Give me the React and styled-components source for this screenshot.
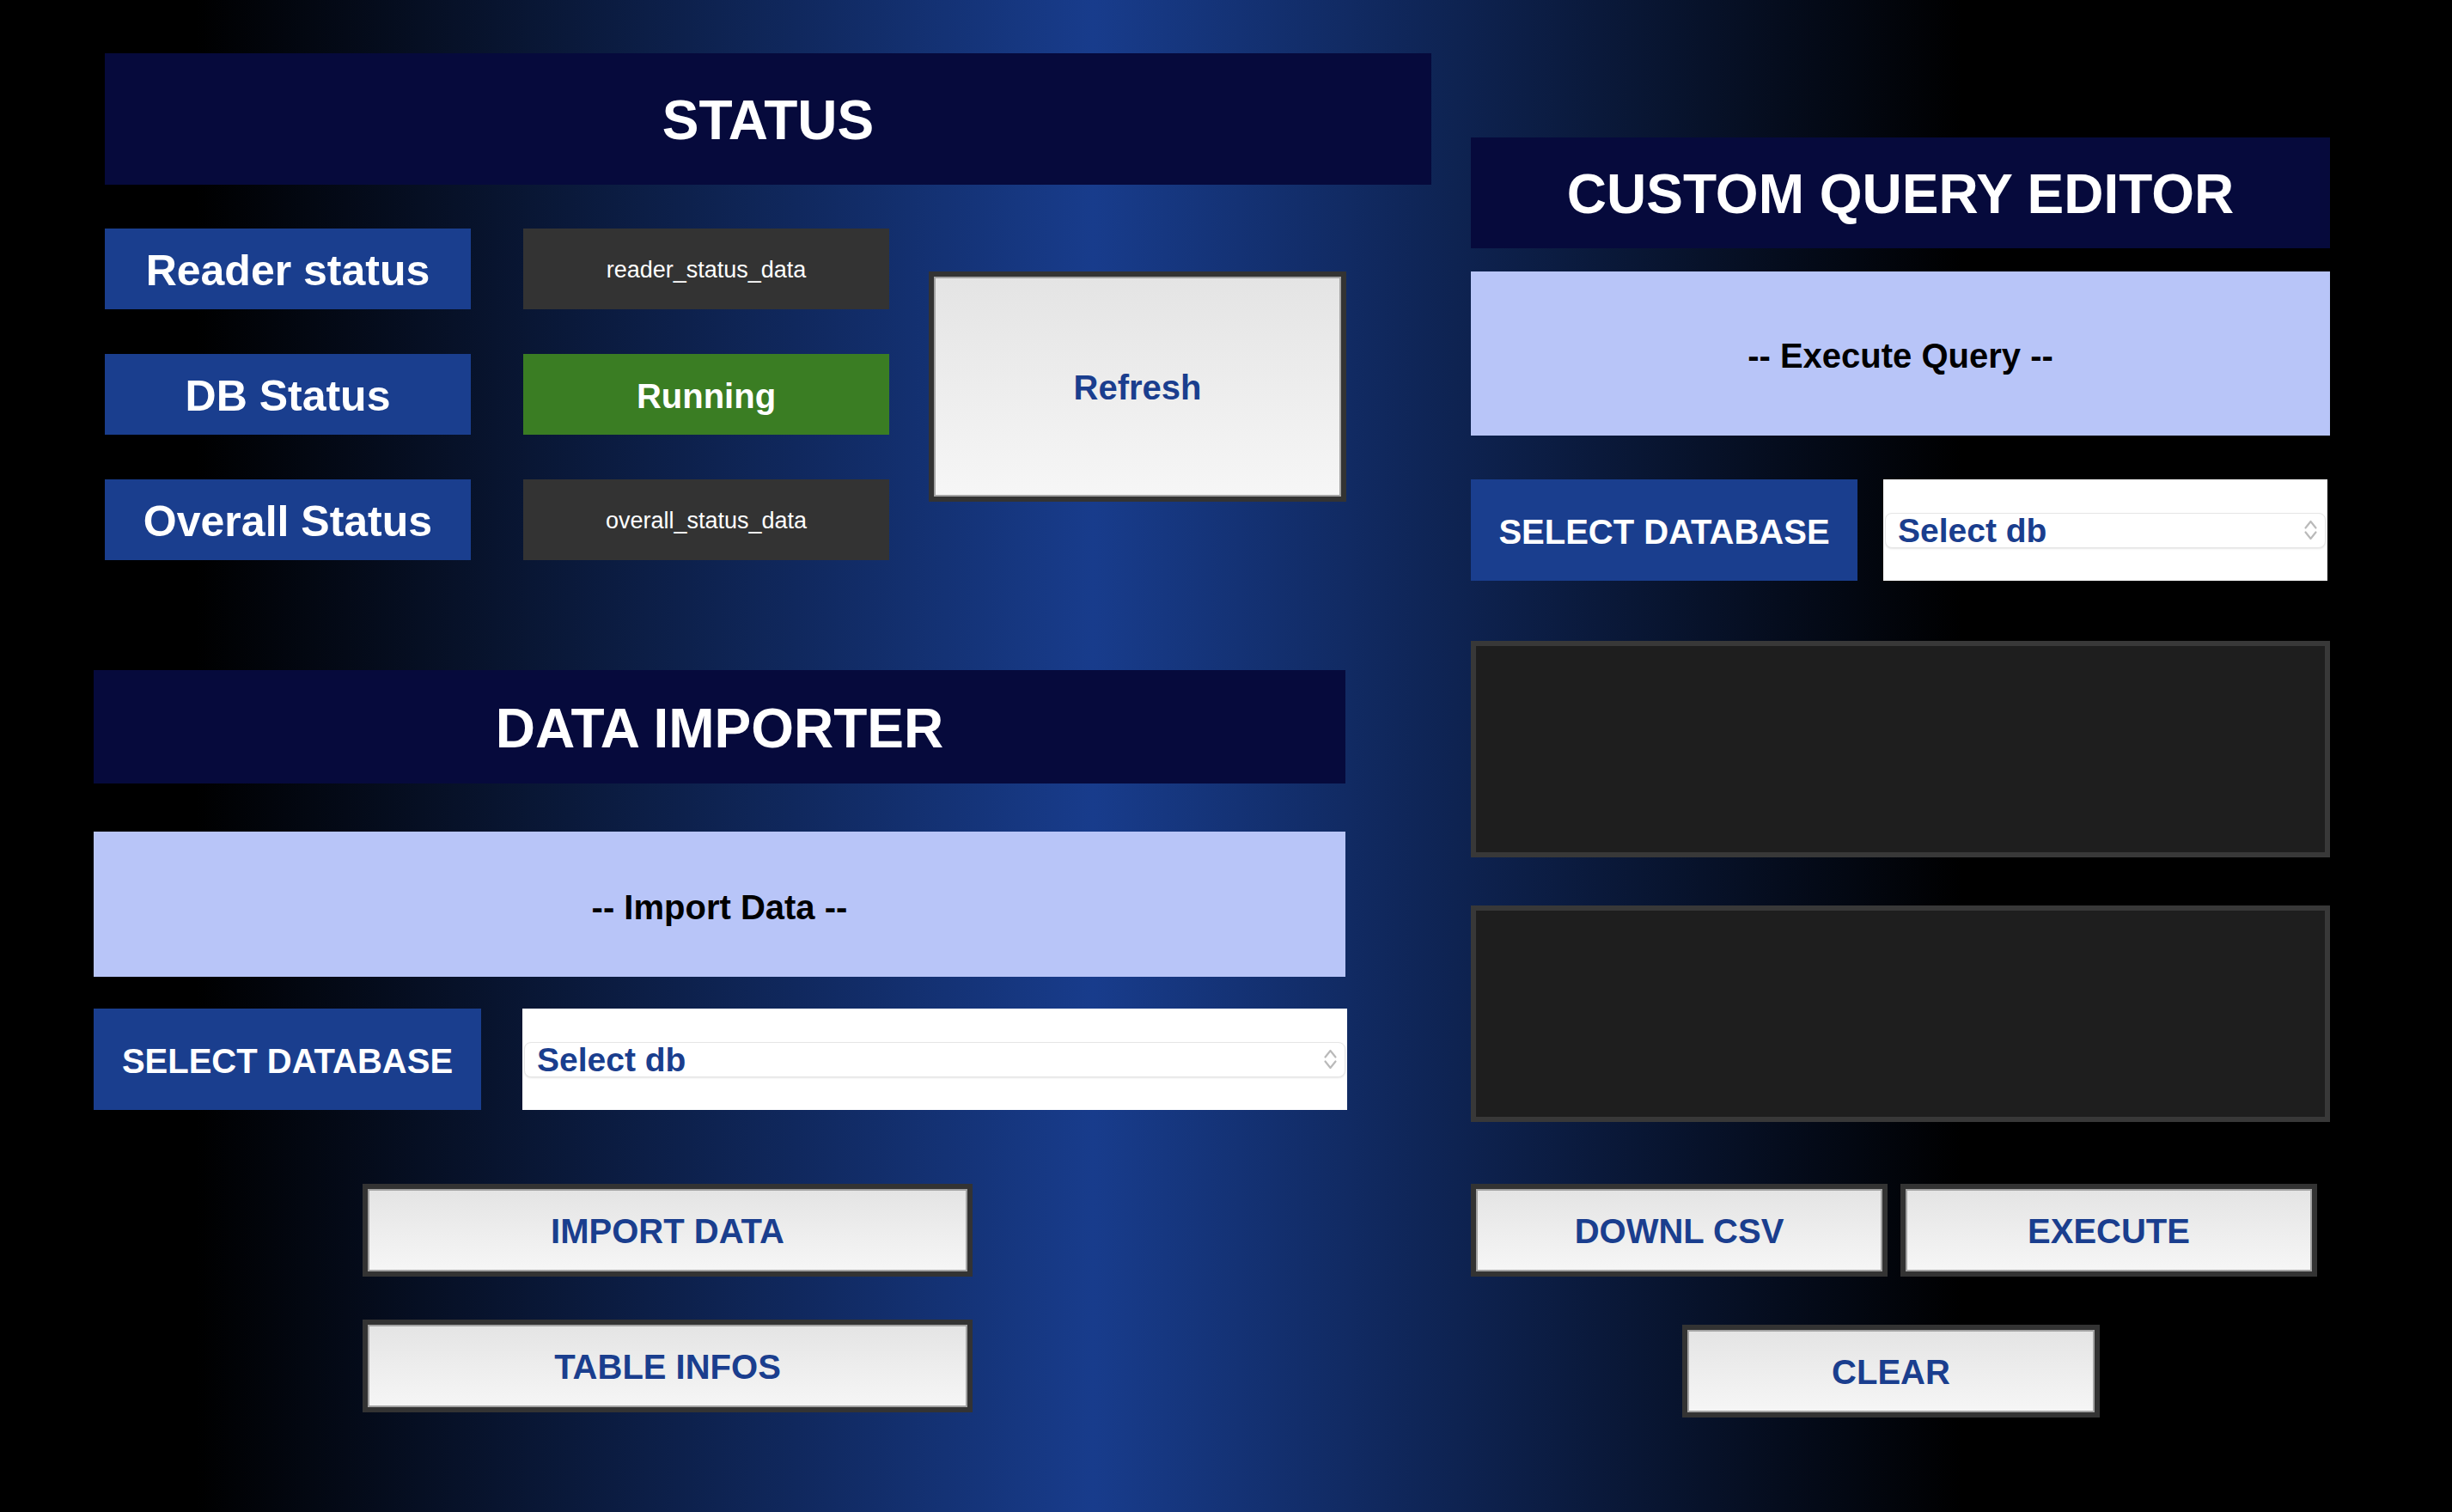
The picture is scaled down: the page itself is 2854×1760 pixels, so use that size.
import styled, {createGlobalStyle} from 'styled-components'

const GlobalStyle = createGlobalStyle`
  html, body {
    margin: 0;
    padding: 0;
  }
  body {
    background: #000;
    font-family: "Liberation Sans", Arial, sans-serif;
  }
`

const Page = styled.div`
  box-sizing: border-box;
  width: 2854px;
  height: 1760px;
  overflow: hidden;
  padding: 62px 0 0 109px;
  display: flex;
  align-items: flex-start;
  gap: 46px;
  background: linear-gradient(to right, #000 0%, #000 8%, #183c8c 44.6%, #000 80%, #000 100%);
`

const Column = styled.div`
  display: flex;
  flex-direction: column;
  align-items: flex-start;
  width: ${p => p.$width}px;
  margin-top: ${p => p.$top || 0}px;
`

const SectionHeader = styled.div`
  box-sizing: border-box;
  display: flex;
  align-items: center;
  justify-content: center;
  width: ${p => p.$width}px;
  height: ${p => p.$height}px;
  margin-left: ${p => p.$indent || 0}px;
  margin-top: ${p => p.$top || 0}px;
  padding-top: 3px;
  background: #060a3c;
  color: #fff;
  font-size: 64px;
  font-weight: 700;
`

const StatusBody = styled.div`
  display: flex;
  align-items: flex-start;
  margin: 51px 0 0 13px;
`

const StatusGrid = styled.div`
  display: grid;
  grid-template-columns: 426px 426px;
  grid-auto-rows: 94px;
  column-gap: 61px;
  row-gap: 52px;
`

const StatusLabel = styled.div`
  box-sizing: border-box;
  display: flex;
  align-items: center;
  justify-content: center;
  padding-top: 4px;
  background: #1a3e8e;
  color: #fff;
  font-size: 50px;
  font-weight: 700;
`

const StatusValue = styled.div`
  box-sizing: border-box;
  display: flex;
  align-items: center;
  justify-content: center;
  padding-top: ${p => p.$running ? 4 : 2}px;
  background: ${p => p.$running ? '#3a7d23' : '#333333'};
  color: #fff;
  font-size: ${p => p.$running ? 40 : 27}px;
  font-weight: ${p => p.$running ? 700 : 400};
`

const Button = styled.button`
  box-sizing: border-box;
  display: flex;
  align-items: center;
  justify-content: center;
  width: ${p => p.$width}px;
  height: ${p => p.$height || 108}px;
  margin-top: ${p => p.$top || 0}px;
  margin-left: ${p => p.$left || 0}px;
  padding: 2px 0 0;
  border: 6px solid #333;
  box-shadow: inset 0 0 0 2px #a4a4a4;
  background: linear-gradient(#e4e4e4, #f6f6f6);
  color: #1a3e8e;
  font-family: "Liberation Sans", Arial, sans-serif;
  font-size: 40px;
  font-weight: 700;
  cursor: pointer;
`

const InfoPanel = styled.div`
  box-sizing: border-box;
  display: flex;
  align-items: center;
  justify-content: center;
  width: ${p => p.$width}px;
  height: ${p => p.$height}px;
  margin-top: ${p => p.$top}px;
  padding-top: ${p => p.$shift}px;
  background: #b8c5f8;
  color: #000;
  font-size: 40px;
  font-weight: 700;
`

const SelectRow = styled.div`
  display: flex;
  height: 118px;
  margin-top: ${p => p.$top}px;
  gap: ${p => p.$gap}px;
`

const SelectLabel = styled.div`
  box-sizing: border-box;
  display: flex;
  align-items: center;
  justify-content: center;
  width: ${p => p.$width}px;
  padding-top: 4px;
  background: #1a3e8e;
  color: #fff;
  font-size: 40px;
  font-weight: 700;
`

const SelectBox = styled.div`
  position: relative;
  box-sizing: border-box;
  display: flex;
  align-items: center;
  width: ${p => p.$width}px;
  padding: 0 2px;
  background: #fff;
`

const DbSelect = styled.select`
  appearance: none;
  -webkit-appearance: none;
  box-sizing: border-box;
  width: 100%;
  height: 41px;
  padding: 0 0 0 14px;
  border: 1px solid #e6e6e6;
  border-radius: 8px;
  box-shadow: 0 1px 2px rgba(0, 0, 0, 0.1);
  background: #fff;
  color: #1a3e8e;
  font-family: "Liberation Sans", Arial, sans-serif;
  font-size: 39px;
  font-weight: 700;
  line-height: 39px;
  outline: none;
`

const Chevrons = styled.svg`
  position: absolute;
  right: 11px;
  top: 50%;
  transform: translateY(-50%);
  pointer-events: none;
`

const QueryArea = styled.textarea`
  display: block;
  box-sizing: border-box;
  width: 1000px;
  height: 252px;
  margin-top: ${p => p.$top}px;
  border: 6px solid #383838;
  background: #1e1e1e;
  color: #ddd;
  resize: none;
  outline: none;
`

const ButtonRow = styled.div`
  display: flex;
  gap: 15px;
  margin-top: ${p => p.$top}px;
`

function DbPicker({width}) {
    return (
        <SelectBox $width={width}>
            <DbSelect defaultValue="">
                <option value="">Select db</option>
            </DbSelect>
            <Chevrons width="17" height="26" viewBox="0 0 17 26">
                <path d="M2.5 10.5 L8.5 3 L14.5 10.5 M2.5 15.5 L8.5 23 L14.5 15.5" fill="none" stroke="#bababa" strokeWidth="2.2" strokeLinecap="round" strokeLinejoin="round"/>
            </Chevrons>
        </SelectBox>
    )
}

export default function App() {
    return (
        <>
            <GlobalStyle/>
            <Page>
                <Column $width={1557}>
                    <SectionHeader $width={1544} $height={153} $indent={13}>STATUS</SectionHeader>
                    <StatusBody>
                        <StatusGrid>
                            <StatusLabel>Reader status</StatusLabel>
                            <StatusValue>reader_status_data</StatusValue>
                            <StatusLabel>DB Status</StatusLabel>
                            <StatusValue $running>Running</StatusValue>
                            <StatusLabel>Overall Status</StatusLabel>
                            <StatusValue>overall_status_data</StatusValue>
                        </StatusGrid>
                        <Button $width={486} $height={268} $top={50} $left={46}>Refresh</Button>
                    </StatusBody>

                    <SectionHeader $width={1457} $height={132} $top={128}>DATA IMPORTER</SectionHeader>
                    <InfoPanel $width={1457} $height={169} $top={56} $shift={8}>-- Import Data --</InfoPanel>
                    <SelectRow $top={37} $gap={48}>
                        <SelectLabel $width={451}>SELECT DATABASE</SelectLabel>
                        <DbPicker width={960}/>
                    </SelectRow>
                    <Button $width={710} $top={86} $left={313}>IMPORT DATA</Button>
                    <Button $width={710} $top={50} $left={313}>TABLE INFOS</Button>
                </Column>

                <Column $width={1000} $top={98}>
                    <SectionHeader $width={1000} $height={129}>CUSTOM QUERY EDITOR</SectionHeader>
                    <InfoPanel $width={1000} $height={191} $top={27} $shift={6}>-- Execute Query --</InfoPanel>
                    <SelectRow $top={51} $gap={30}>
                        <SelectLabel $width={450}>SELECT DATABASE</SelectLabel>
                        <DbPicker width={517}/>
                    </SelectRow>
                    <QueryArea $top={70}/>
                    <QueryArea $top={56}/>
                    <ButtonRow $top={72}>
                        <Button $width={485}>DOWNL CSV</Button>
                        <Button $width={485}>EXECUTE</Button>
                    </ButtonRow>
                    <Button $width={486} $top={56} $left={246}>CLEAR</Button>
                </Column>
            </Page>
        </>
    )
}
